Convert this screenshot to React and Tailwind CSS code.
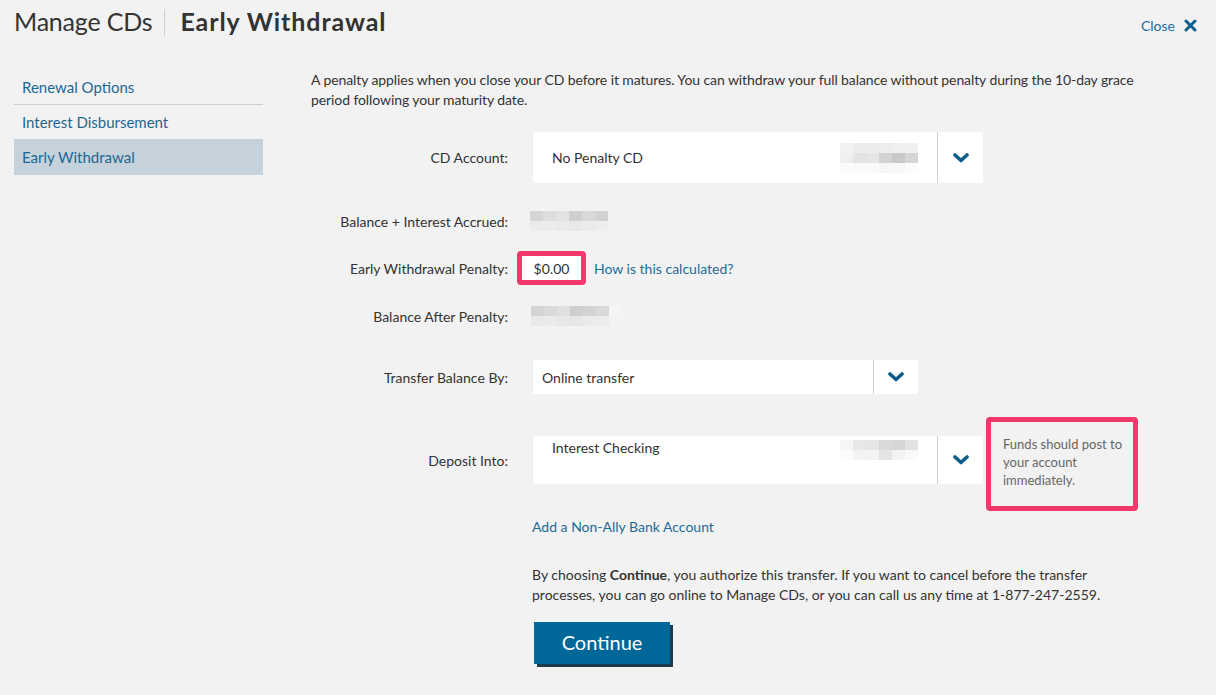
import React from "react";

const font = { fontFamily: "Lato, 'Noto Sans', sans-serif" };

function Chevron() {
  return (
    <svg width="16" height="10" viewBox="0 0 16 10">
      <polyline points="2,2 8,7.5 14,2" fill="none" stroke="#0b5e8c" strokeWidth="3.6" strokeLinecap="round" strokeLinejoin="round" />
    </svg>
  );
}

function Blur({ rows }) {
  return (
    <div className="flex flex-col">
      {rows.map((r, i) => (
        <div key={i} className="flex">
          {r.map((c, j) => (
            <div key={j} className="w-[13px] h-[10px]" style={{ backgroundColor: c }} />
          ))}
        </div>
      ))}
    </div>
  );
}

const blurA = [
  ["#f2f2f2", "#ececec", "#ebebeb", "#ededed", "#efefef", "#f0f0f0"],
  ["#efefef", "#e3e3e3", "#e6e6e6", "#d2d2d2", "#c9c9c9", "#d6d6d6"],
  ["#fbfbfb", "#fafafa", "#fafafa", "#f6f6f6", "#f8f8f8", "#fcfcfc"],
];
const blurB = [
  ["#d6d6d6", "#dedede", "#e2e2e2", "#cfcfcf", "#d8d8d8", "#d2d2d2"],
  ["#ebebeb", "#ececec", "#eaeaea", "#e8e8e8", "#ebebeb", "#ededed"],
];
const blurC = [
  ["#d4d4d4", "#dadada", "#e0e0e0", "#cfcfcf", "#d3d3d3", "#d9d9d9", "#f5f5f5"],
  ["#e9e9e9", "#ebebeb", "#e7e7e7", "#e6e6e6", "#ebebeb", "#ececec", "#f3f3f3"],
];
const blurD = [
  ["#f6f6f6", "#e8e8e8", "#e6e6e6", "#d9d9d9", "#d5d5d5", "#e2e2e2"],
  ["#fbfbfb", "#f3f3f3", "#f2f2f2", "#e4e4e4", "#f3f3f3", "#fafafa"],
];

function Label({ children }) {
  return <div className="w-[197px] shrink-0 text-right text-[14px] text-[#333]">{children}</div>;
}

export default function App() {
  return (
    <div className="w-[1216px] h-[695px] bg-[#f2f2f2] overflow-hidden" style={font}>
      {/* Header */}
      <div className="flex items-center justify-between h-[44px] pl-[14px] pr-[19px]">
        <div className="flex items-center text-[25px] text-[#333]">
          <span className="font-normal tracking-[-0.2px]">Manage CDs</span>
          <span className="ml-[12px] mr-[15px] w-px h-[27px] bg-[#cfcfcf]" />
          <span className="font-bold tracking-[0.9px]">Early Withdrawal</span>
        </div>
        <div className="flex items-center gap-[9px] text-[14px] text-[#1f6b98] mt-[6px]">
          <span>Close</span>
          <svg width="13" height="13" viewBox="0 0 13 13">
            <path d="M2 2 L11 11 M11 2 L2 11" stroke="#0b5e8c" strokeWidth="3" strokeLinecap="round" />
          </svg>
        </div>
      </div>

      <div className="flex mt-[26px]">
        {/* Sidebar */}
        <div className="w-[249px] ml-[14px] shrink-0 text-[15px] text-[#1c6893]">
          <div className="h-[35px] flex items-center pl-[8px] border-b border-[#cdcdcd]">Renewal Options</div>
          <div className="h-[34px] flex items-center pl-[8px]">Interest Disbursement</div>
          <div className="h-[36px] flex items-center pl-[8px] bg-[#c5d2db]">Early Withdrawal</div>
        </div>

        {/* Main */}
        <div className="ml-[48px] flex flex-col text-[14px] text-[#333]">
          <p className="w-[840px] leading-[20px] tracking-[-0.09px]">
            A penalty applies when you close your CD before it matures. You can withdraw your full balance without penalty during the 10-day grace period following your maturity date.
          </p>

          {/* CD Account */}
          <div className="flex items-center mt-[22px] h-[51px]">
            <Label>CD Account:</Label>
            <div className="ml-[25px] flex h-[51px] w-[450px] bg-white">
              <div className="flex-1 flex items-center justify-between pl-[19px] pr-[19px]">
                <span>No Penalty CD</span>
                <Blur rows={blurA} />
              </div>
              <div className="w-px bg-[#d0d0d0]" />
              <div className="w-[45px] flex items-center justify-center"><Chevron /></div>
            </div>
          </div>

          {/* Balance + interest */}
          <div className="flex items-center mt-[21px] h-[34px]">
            <Label>Balance + Interest Accrued:</Label>
            <div className="ml-[22px]"><Blur rows={blurB} /></div>
          </div>

          {/* Penalty */}
          <div className="flex items-center mt-[13px] h-[34px]">
            <Label>Early Withdrawal Penalty:</Label>
            <div className="ml-[9px] w-[69px] h-[34px] border-[5px] border-[#f4386b] rounded-[4px] bg-white flex items-center justify-center">$0.00</div>
            <span className="ml-[8px] text-[#1f6b98]">How is this calculated?</span>
          </div>

          {/* Balance after */}
          <div className="flex items-center mt-[14px] h-[34px]">
            <Label>Balance After Penalty:</Label>
            <div className="ml-[23px]"><Blur rows={blurC} /></div>
          </div>

          {/* Transfer */}
          <div className="flex items-center mt-[27px] h-[34px]">
            <Label>Transfer Balance By:</Label>
            <div className="ml-[25px] flex h-[34px] w-[385px] bg-white">
              <div className="flex-1 flex items-center pl-[9px]">Online transfer</div>
              <div className="w-px bg-[#d0d0d0]" />
              <div className="w-[44px] flex items-center justify-center"><Chevron /></div>
            </div>
          </div>

          {/* Deposit */}
          <div className="flex items-start mt-[23px]">
            <div className="mt-[19px] h-[48px] flex items-center">
              <Label>Deposit Into:</Label>
            </div>
            <div className="ml-[25px] mt-[19px] flex h-[48px] w-[450px] bg-white">
              <div className="flex-1 flex items-start justify-between pl-[19px] pr-[19px] pt-[1px]">
                <span>Interest Checking</span>
                <div className="mt-[3px]"><Blur rows={blurD} /></div>
              </div>
              <div className="w-px bg-[#d0d0d0]" />
              <div className="w-[45px] flex items-center justify-center"><Chevron /></div>
            </div>
            <div className="ml-[3px] w-[152px] h-[94px] border-[5px] border-[#f4386b] rounded-[4px] pl-[12px] pt-[13px] text-[13px] leading-[18px] text-[#666]">
              Funds should post to your account immediately.
            </div>
          </div>

          <div className="ml-[221px] mt-[6px] leading-[20px] text-[#1f6b98]">Add a Non-Ally Bank Account</div>

          <p className="ml-[221px] mt-[28px] w-[600px] leading-[20px]">
            By choosing <b>Continue</b>, you authorize this transfer. If you want to cancel before the transfer processes, you can go online to Manage CDs, or you can call us any time at 1-877-247-2559.
          </p>

          <div className="ml-[223px] mt-[17px]">
            <button className="w-[136px] h-[42px] pb-[3px] bg-[#006899] text-white text-[20px] shadow-[3px_3px_0_#1d3b4c]" style={font}>
              Continue
            </button>
          </div>
        </div>
      </div>
    </div>
  );
}
